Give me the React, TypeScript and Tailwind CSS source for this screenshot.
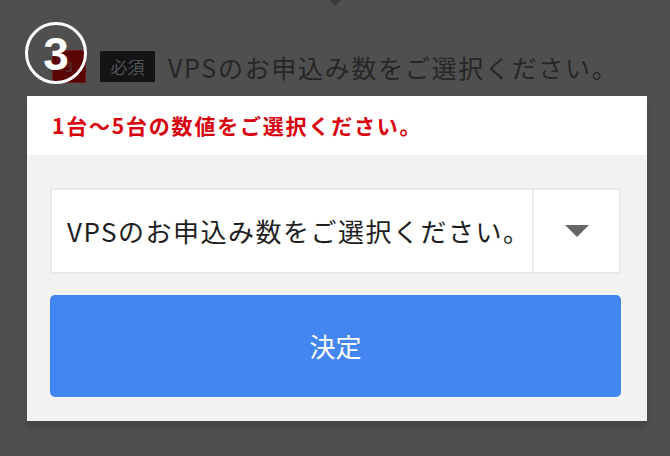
import React from "react";

export default function App() {
  const font = { fontFamily: '"Noto Sans CJK JP", "Noto Sans", sans-serif' };
  return (
    <div
      className="relative w-[670px] h-[456px] overflow-hidden bg-[#4f4f4f]"
      style={font}
    >
      {/* small pointer at top */}
      <div className="flex justify-center h-0">
        <div className="w-0 h-0 border-l-[6px] border-r-[6px] border-t-[6px] border-l-transparent border-r-transparent border-t-[#3a3a3a]" />
      </div>

      {/* dimmed page row behind overlay */}
      <div className="flex items-center pt-[50px] pl-[52px] h-[33px] box-content">
        <div className="w-[34px] h-[33px] bg-[#5a0505] border border-dotted border-[#7a2a2a] flex items-center justify-center text-[14px] text-[#5a3a3a]">
          3
        </div>
        <div className="ml-[14px] w-[55px] h-[31px] bg-[#141414] flex items-center justify-center text-[17px] text-[#4e535c]">
          必須
        </div>
        <div className="ml-[13px] text-[25px] leading-none text-[#262626] tracking-[1.7px] mt-[2px]">
          VPSのお申込み数をご選択ください。
        </div>
      </div>

      {/* numbered annotation */}
      <div className="absolute left-[25px] top-[22px] w-[62px] h-[62px] rounded-full border-[3px] border-white flex items-center justify-center">
        <span
          className="text-white font-bold text-[46px] leading-none mt-[1px]"
          style={{ fontFamily: '"Liberation Sans", Arial, sans-serif' }}
        >
          3
        </span>
      </div>

      {/* popup panel */}
      <div className="ml-[27px] mt-[13px] w-[620px] h-[325px] flex flex-col shadow-[0_6px_6px_rgba(0,0,0,0.15)]">
        <div className="h-[59px] bg-white flex items-center pl-[25px]">
          <span className="text-[#d8000c] font-bold text-[21px] leading-none tracking-[1.8px]">
            1台～5台の数値をご選択ください。
          </span>
        </div>
        <div className="flex-1 bg-[#f2f2f2] flex flex-col pt-[33px] pl-[23px] pr-[26px]">
          <div className="h-[86px] bg-white border-2 border-[#e9e9e9] flex">
            <div className="flex-1 flex items-center pl-[15px] text-[26px] text-[#1e1e1e] leading-none tracking-[1.5px]">
              VPSのお申込み数をご選択ください。
            </div>
            <div className="w-[87px] border-l-2 border-[#ececec] flex items-center justify-center">
              <div className="w-0 h-0 border-l-[12px] border-r-[12px] border-t-[12px] border-l-transparent border-r-transparent border-t-[#666666]" />
            </div>
          </div>
          <div className="mt-[21px] h-[102px] rounded-[5px] bg-[#4386f2] flex items-center justify-center text-white text-[26px] leading-none">
            決定
          </div>
        </div>
      </div>
    </div>
  );
}
